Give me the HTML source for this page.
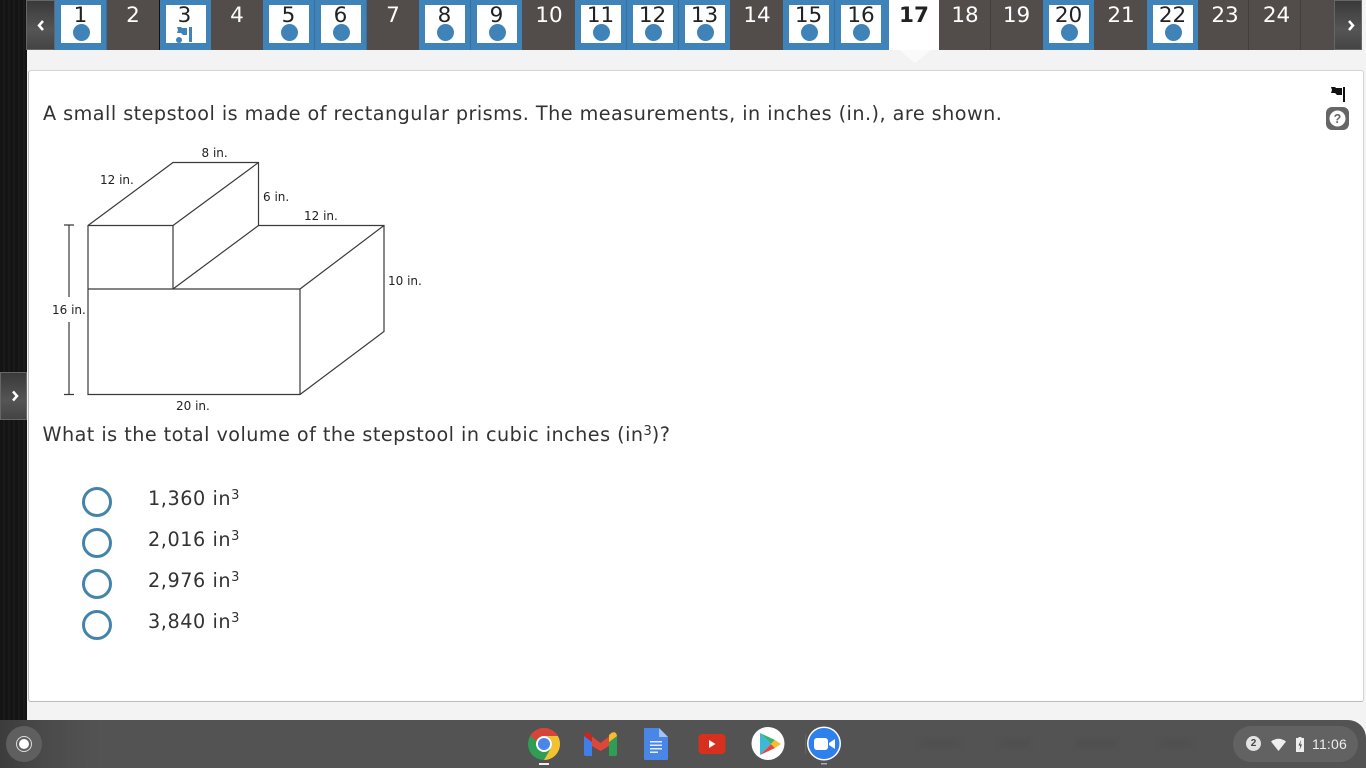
<!DOCTYPE html>
<html><head><meta charset="utf-8"><style>
html,body{margin:0;padding:0;width:1366px;height:768px;overflow:hidden;background:#f3f3f3;font-family:"DejaVu Sans","Liberation Sans",sans-serif;color:#333}
.abs,.tab,.t{position:absolute}
#side{left:0;top:0;width:27px;height:768px;background:repeating-linear-gradient(90deg,#141414 0 3px,#1a1a1a 3px 5px)}
#bar{left:54px;top:0;width:1281px;height:50px;background:#524c4b}
.tab{top:0;width:52px;height:50px;box-sizing:border-box;text-align:center;font-size:21.5px;line-height:32px;color:#fff}
.tab.sep{border-left:1px solid #443f3e}
.tab.a{background:#3f83b9;color:#222;border-right:1px solid #376f9e}
.tab.a:before{content:"";position:absolute;left:6px;top:5px;width:40px;height:38px;background:#fff}
.tab.a span{position:relative}
.tab.a i{position:absolute;left:18px;top:24px;width:17px;height:17px;border-radius:50%;background:#3f83b9}
.btn{background:linear-gradient(180deg,#3a3a3a,#555 60%,#444);border:1px solid #666;box-sizing:border-box}
#card{left:28px;top:70px;width:1336px;height:632px;box-sizing:border-box;background:#fff;border:1px solid #d4d4d4;border-left-color:#bbb;border-bottom-color:#bbb;border-radius:3px}
.t{white-space:nowrap;font-size:19.2px;letter-spacing:.47px;color:#333}
.o{letter-spacing:.58px}
sup{font-size:13px;line-height:0;vertical-align:6px;letter-spacing:0}
.r{left:82px;width:24px;height:24px;border:3px solid #4484ab;border-radius:50%;background:#fff}
#shelf{left:0;top:720px;width:1366px;height:48px;background:linear-gradient(90deg,#3c3c3c 0,#4a4a4a 45px,#535353 100px);border-top-right-radius:18px}
</style></head><body>
<div id="side" class="abs"></div>
<div id="bar" class="abs"></div>
<div class="abs btn" style="left:26px;top:0;width:29px;height:50px"><svg width="27" height="48"><path d="M16 20l-4 4.500 4 4.500" fill="none" stroke="#fff" stroke-width="2.500"/></svg></div>
<div class="abs btn" style="left:1334px;top:0;width:28px;height:50px"><svg width="26" height="48"><path d="M14 20l4 4.500-4 4.500" fill="none" stroke="#fff" stroke-width="2.500"/></svg></div>

<div class="tab a" style="left:55px"><span>1</span><i></i></div>
<div class="tab" style="left:107px">2</div>
<div class="tab a" style="left:159px;border-left:1px solid #111;padding-right:2px;border-right:0"><span>3</span>
<svg style="position:absolute;left:15px;top:24px" width="20" height="20"><path d="M2 3h4l1 1h5v7H8L6 9H2l1-3z" fill="#3f83b9"/><rect x="14" y="3" width="3" height="15" fill="#3f83b9"/><circle cx="4" cy="16" r="3" fill="#3f83b9"/></svg></div>
<div class="tab" style="left:211px">4</div>
<div class="tab a" style="left:263px"><span>5</span><i></i></div>
<div class="tab a" style="left:315px"><span>6</span><i></i></div>
<div class="tab" style="left:367px">7</div>
<div class="tab a" style="left:419px"><span>8</span><i></i></div>
<div class="tab a" style="left:471px;width:51px;border-right:0"><span>9</span><i></i></div>
<div class="tab" style="left:523px">10</div>
<div class="tab a" style="left:575px"><span>11</span><i></i></div>
<div class="tab a" style="left:627px"><span>12</span><i></i></div>
<div class="tab a" style="left:679px;width:51px;border-right:0"><span>13</span><i></i></div>
<div class="tab" style="left:731px">14</div>
<div class="tab a" style="left:783px"><span>15</span><i></i></div>
<div class="tab a" style="left:835px;width:54px;border-right:0"><span style="left:-1px">16</span><i></i></div>
<div class="tab" style="left:889px;width:50px;background:#fff;color:#222;font-weight:bold">17</div>
<div class="tab" style="left:939px">18</div>
<div class="tab sep" style="left:990px">19</div>
<div class="tab a" style="left:1043px;width:51px;border-right:0"><span>20</span><i></i></div>
<div class="tab" style="left:1095px">21</div>
<div class="tab a" style="left:1147px;width:51px;border-right:0"><span>22</span><i></i></div>
<div class="tab" style="left:1199px">23</div>
<div class="tab sep" style="left:1248px;width:54px;padding-left:2px">24</div>
<div class="abs" style="left:1300px;top:0;width:1px;height:50px;background:#443f3e"></div>

<div id="card" class="abs"></div>
<svg class="abs" style="left:899px;top:50px" width="32" height="14"><path d="M0 0h32L16 13z" fill="#fafafa"/></svg>
<div class="abs" style="left:0;top:372px;width:27px;height:48px;box-sizing:border-box;background:linear-gradient(180deg,#3a3a3a,#555 60%,#444);border:1px solid #666"><svg width="25" height="46"><path d="M12 18.500l4 4.500-4 4.500" fill="none" stroke="#fff" stroke-width="2.500"/></svg></div>

<svg class="abs" style="left:1325px;top:84px" width="25" height="48">
<path d="M6 3h4l1 1h6v7h-5l-2-2H6l1-3z" fill="#111"/><rect x="18" y="3" width="2" height="15" fill="#111"/>
<rect x="1" y="23" width="23" height="23" rx="6" fill="#666"/><circle cx="12.500" cy="34.500" r="8" fill="#fff"/>
<text x="12.500" y="39" text-anchor="middle" font-family="Liberation Sans" font-weight="bold" font-size="12.500" fill="#666">?</text></svg>

<div class="t" style="left:43px;top:102px">A small stepstool is made of rectangular prisms. The measurements, in inches (in.), are shown.</div>

<svg class="abs" style="left:40px;top:140px" width="400" height="280">
<g transform="translate(-40 -140)" fill="none" stroke="#3a3a3a" stroke-width="1.200">
<path d="M88 225.500L173 162.500H258.500V225.500H384V331.500L300 394.500H88Z"/>
<path d="M88 225.500H173V289M173 225.500L258.500 162.500M173 289L258.500 225.500M88 289H300V394.500M300 289L384 225.500"/>
<path d="M64 225H74M69 225V297M69 322V394M64 394.500H74"/>
</g>
<g font-family="DejaVu Sans" font-size="12" fill="#222">
<text x="161.500" y="17">8 in.</text><text x="60" y="44">12 in.</text><text x="223" y="61">6 in.</text>
<text x="264" y="80">12 in.</text><text x="348" y="145">10 in.</text><text x="12" y="174">16 in.</text><text x="136" y="270">20 in.</text>
</g></svg>

<div class="t" style="left:42.500px;top:423px">What is the total volume of the stepstool in cubic inches (in<sup>3</sup>)?</div>

<div class="abs r" style="top:487px"></div>
<div class="abs r" style="top:528px"></div>
<div class="abs r" style="top:569px"></div>
<div class="abs r" style="top:610px"></div>
<div class="t o" style="left:148px;top:487px">1,360 in<sup>3</sup></div>
<div class="t o" style="left:148px;top:528px">2,016 in<sup>3</sup></div>
<div class="t o" style="left:148px;top:569px">2,976 in<sup>3</sup></div>
<div class="t o" style="left:148px;top:610px">3,840 in<sup>3</sup></div>

<div id="shelf" class="abs">
<div class="abs" style="left:6px;top:6px;width:36px;height:36px;border-radius:50%;background:#5f5f5f"></div>
<div class="abs" style="left:16px;top:16px;width:14px;height:14px;border-radius:50%;border:1px solid #ddd"></div>
<div class="abs" style="left:19px;top:19px;width:10px;height:10px;border-radius:50%;background:#fff"></div>

<div class="abs" style="left:1233px;top:6px;width:125px;height:36px;border-radius:18px;background:#626262"></div>
<div class="abs" style="left:1246px;top:16px;width:15px;height:15px;border-radius:50%;background:#e3e3e3;color:#444;font:bold 10px/15px 'Liberation Sans';text-align:center">2</div>
<svg class="abs" style="left:1271px;top:18px" width="15" height="13"><path d="M0 3.500Q7.500-2 15 3.500L7.500 13Z" fill="#eee"/></svg>
<svg class="abs" style="left:1296px;top:17px" width="9" height="16"><path d="M2.500 0h3v1H8v14H0V1h2.500z" fill="#eee"/><path d="M5 3L2.500 8.500h1.800L3.500 13 6 7.500H4.200z" fill="#444"/></svg>
<div class="abs" style="left:1312px;top:15px;color:#eee;font:14px/18px 'Liberation Sans';letter-spacing:.2px">11:06</div>

<svg class="abs" style="left:520px;top:0" width="330" height="48">
<!-- chrome -->
<circle cx="24" cy="24" r="16" fill="#2f9e54"/>
<path d="M10.140 16A16 16 0 0 1 37.860 16H24A8 8 0 0 0 16.600 21Z" fill="#d9443a"/>
<path d="M37.860 16A16 16 0 0 1 24 40L31 28A8 8 0 0 0 24 16Z" fill="#f2c230"/>
<circle cx="24" cy="24" r="8" fill="#fff"/><circle cx="24" cy="24" r="6" fill="#4a85e8"/>
<rect x="19" y="43" width="10" height="2" fill="#eee"/>
<!-- gmail -->
<path d="M66 12L80.500 23 95 12 97 18 89 26 80.500 31 72 26 64 18Z" fill="#e0453a"/>
<path d="M64 16L72 22V36H66Q64 36 64 34Z" fill="#3f80e8"/><path d="M97 16L89 22V36H95Q97 36 97 34Z" fill="#2f9e54"/>
<path d="M64 17Q64 11 69 12.500L72 15V22L64 16Z" fill="#c5281f"/><path d="M97 17Q97 11 92 12.500L89 15V22L97 16Z" fill="#f4bd2f"/>
<!-- docs -->
<path d="M124 8H139L148 17V39Q148 40 146 40H126Q124 40 124 39Z" fill="#4a86e8"/><path d="M139 8L148 17H139Z" fill="#a6c2f2"/>
<path d="M130 21h12v1.500h-12zM130 24.500h12V26h-12zM130 28h12v1.500h-12zM130 31.500h8V33h-8z" fill="#e4edfb"/>
<!-- youtube -->
<rect x="178.500" y="14" width="27" height="20" rx="4" fill="#d8301f"/><path d="M189 20l6.500 4-6.500 4Z" fill="#fff"/>
<!-- play -->
<circle cx="248" cy="23.500" r="16.500" fill="#fff"/>
<path d="M240 13L251 24 240 35Z" fill="#3cb8d8"/><path d="M240 13L255 20 251 24Z" fill="#3bb373"/><path d="M240 35L255 28 251 24Z" fill="#e8453c"/><path d="M255 20L261 24 255 28 251 24Z" fill="#f5bd2d"/>
<rect x="285" y="14" width="1" height="20" fill="#666"/>
<!-- zoom -->
<circle cx="304" cy="23.500" r="17" fill="#fff"/><circle cx="304" cy="23.500" r="15.500" fill="#2e80ed"/>
<rect x="294" y="18" width="14" height="12" rx="3" fill="#fff"/><path d="M309 23l6-4v10l-6-4Z" fill="#fff"/>
<rect x="301" y="43" width="6" height="1.500" fill="#aaa"/>
</svg>
<div class="abs" style="left:920px;top:19px;width:40px;height:8px;background:#505050;filter:blur(2px)"></div>
<div class="abs" style="left:1000px;top:19px;width:30px;height:8px;background:#505050;filter:blur(2px)"></div>
<div class="abs" style="left:1077px;top:19px;width:40px;height:8px;background:#505050;filter:blur(2px)"></div>
<div class="abs" style="left:1160px;top:19px;width:32px;height:8px;background:#505050;filter:blur(2px)"></div>
</div>
</body></html>
